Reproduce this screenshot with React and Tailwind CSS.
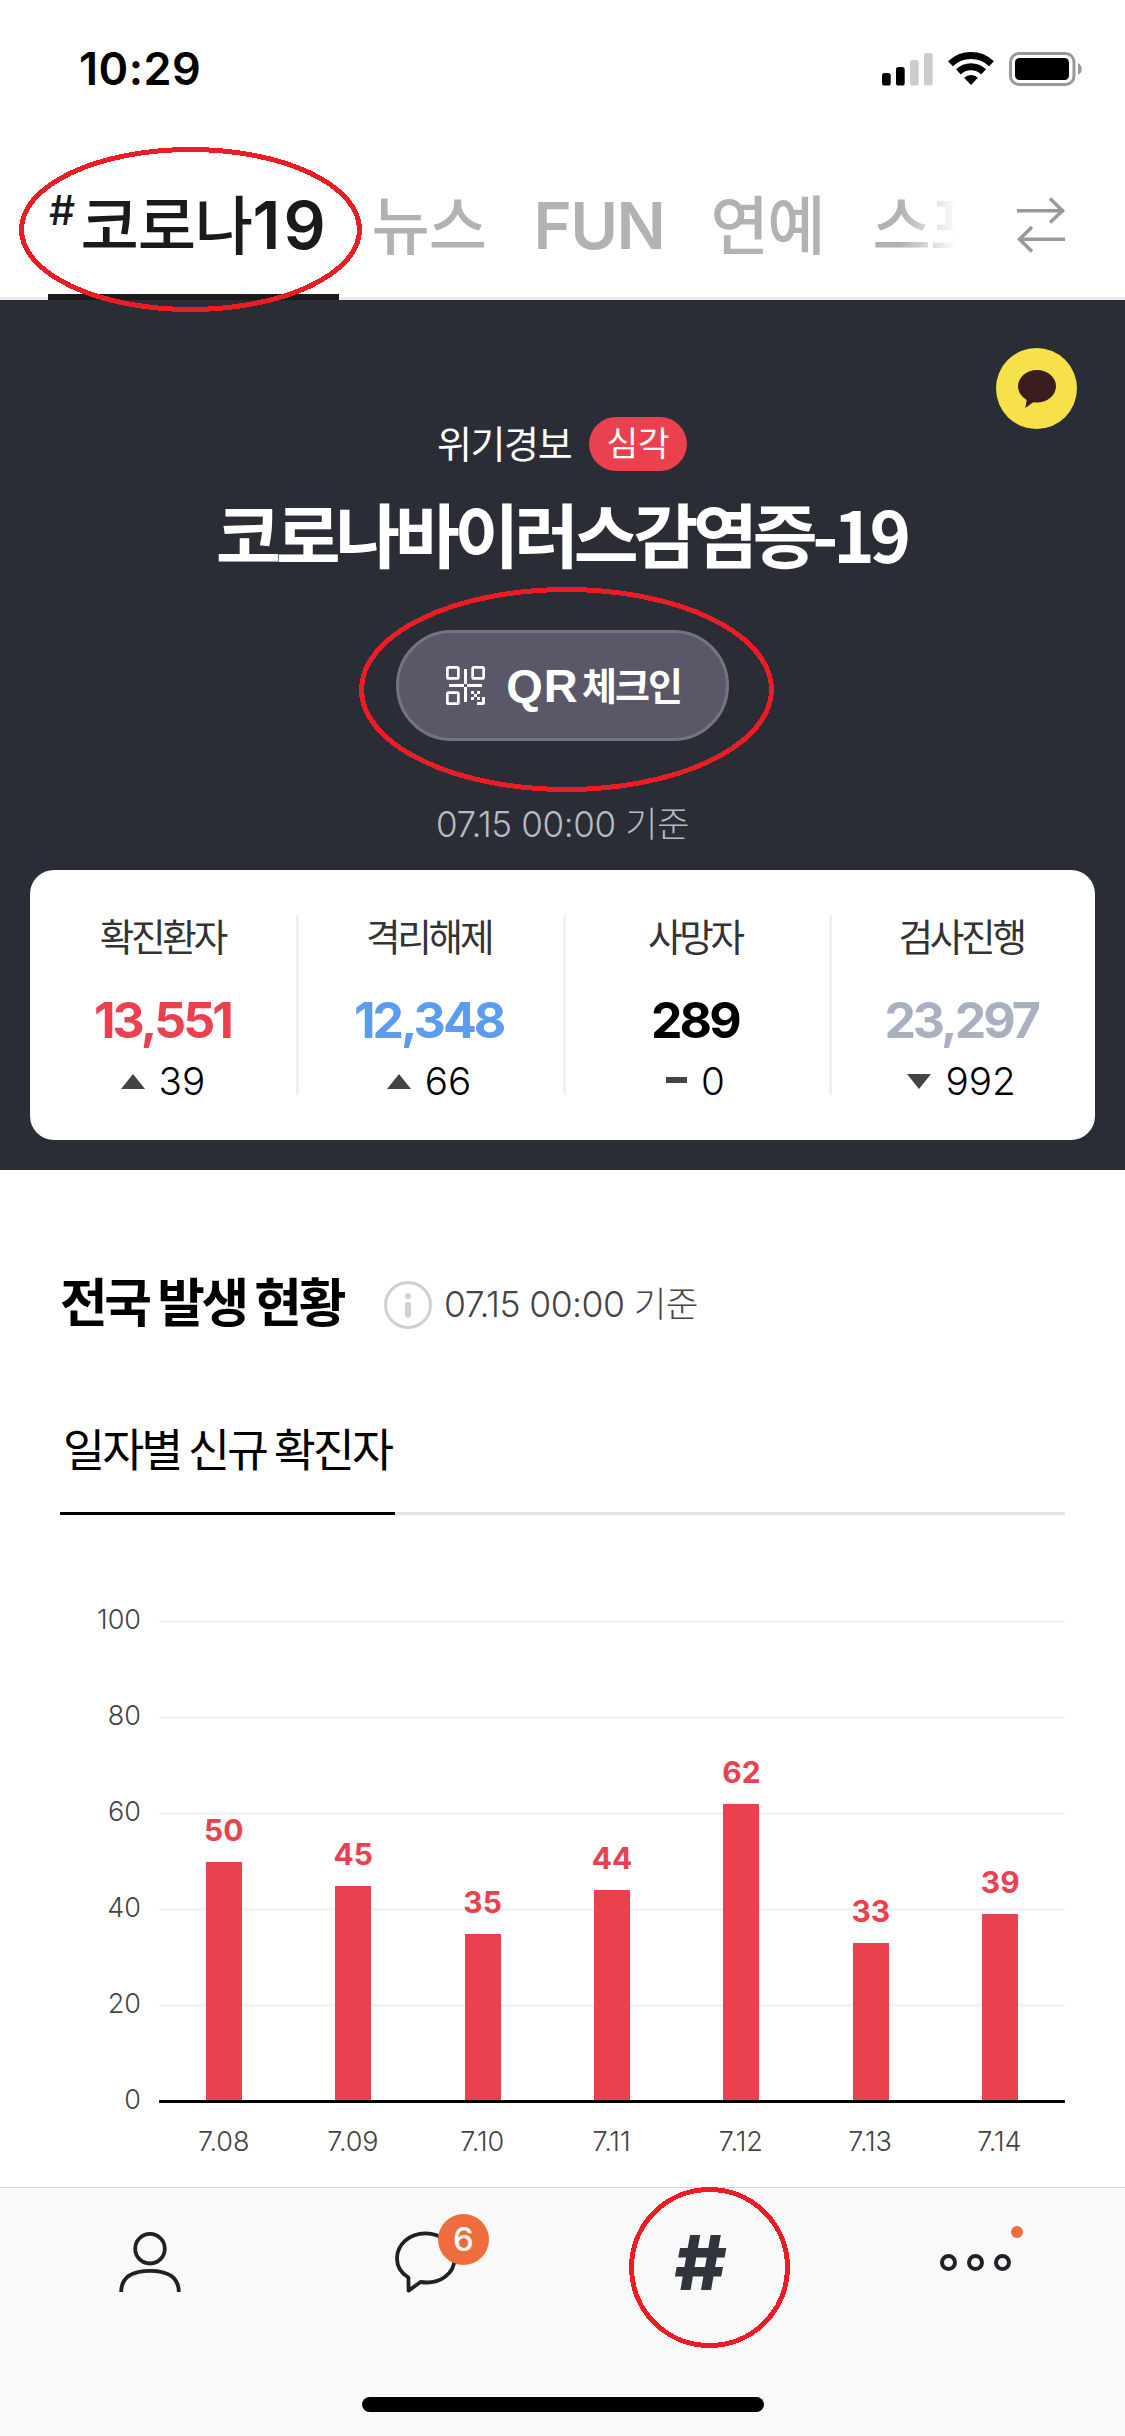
const KR = 'font-["Noto_Sans_CJK_KR",sans-serif]';
const LATIN = 'font-["Inter","Noto_Sans_CJK_KR",sans-serif]';

function SignalIcon() {
  return (
    <svg className="h-[34px] w-[51px]" viewBox="0 0 51 34">
      <rect x="0" y="21" width="8.7" height="12.5" rx="2.6" fill="#000" />
      <rect x="14" y="15" width="8.7" height="18.5" rx="2.6" fill="#000" />
      <rect x="28" y="8" width="8.7" height="25.5" rx="2.6" fill="#ccc" />
      <rect x="42" y="1" width="8.7" height="32.5" rx="2.6" fill="#ccc" />
    </svg>
  );
}

function WifiIcon() {
  return (
    <svg className="h-[34px] w-[46px]" viewBox="0 0 46 34">
      <g fill="none" stroke="#000" strokeWidth="7">
        <path d="M2.5 11.8A29.5 29.5 0 0 1 43.5 11.8" />
        <path d="M10.4 19.9A18.2 18.2 0 0 1 35.6 19.9" />
      </g>
      <path d="M23 33L16.1 25.8A10 10 0 0 1 29.9 25.8Z" fill="#000" />
    </svg>
  );
}

function BatteryIcon() {
  return (
    <svg className="h-[34px] w-[74px]" viewBox="0 0 74 34">
      <rect x="1.5" y="1.5" width="63.5" height="31" rx="8.5" fill="none" stroke="#999" strokeWidth="3" />
      <rect x="6" y="6" width="54" height="22" rx="4.5" fill="#000" />
      <path d="M69 11C74 13.5 74 20.5 69 23Z" fill="#999" />
    </svg>
  );
}

function SwapIcon() {
  return (
    <svg className="h-[56px] w-[50px]" viewBox="0 0 50 56" fill="none" stroke="#999" strokeWidth="3.5">
      <path d="M1 13.7H48M34 1.5L46.5 13.7L34 25.5" />
      <path d="M49 42.3H3M16 30L3.5 42.3L16 54.5" />
    </svg>
  );
}

function QrIcon() {
  return (
    <svg className="size-[39px]" viewBox="0 0 39 39">
      <g fill="none" stroke="#fff" strokeWidth="2.7">
        <rect x="1.35" y="1.35" width="11" height="11" rx="1.2" />
        <rect x="26.65" y="1.35" width="11" height="11" rx="1.2" />
        <rect x="1.35" y="26.65" width="11" height="11" rx="1.2" />
      </g>
      <path
        fill="#fff"
        d="M18 3h3v15h-3zM18 21h3v15h-3zM3 18h15v3H3zM21 18h15v3H21zM25 25h3v3h-3zM31 25h3v3h-3zM28 28h3v3h-3zM25 31h3v3h-3zM31 31h3v3h-3zM36 31h3v6a2 2 0 0 1-2 2h-6v-3h5z"
      />
    </svg>
  );
}

function InfoIcon() {
  return (
    <svg className="size-[48px]" viewBox="0 0 48 48">
      <circle cx="24" cy="24" r="22.5" fill="none" stroke="#d0d0d0" strokeWidth="3" />
      <circle cx="24" cy="15" r="3" fill="#d0d0d0" />
      <rect x="21" y="21" width="6" height="15.5" rx="3" fill="#d0d0d0" />
    </svg>
  );
}

const tabs = [
  { label: '뉴스', cls: 'w-[162px] tracking-[-1px]' },
  { label: 'FUN', cls: 'w-[177px] font-["Inter",sans-serif] text-[65px] font-semibold tracking-[-1.5px]' },
  { label: '연예', cls: 'w-[162px] tracking-[-1.5px]' },
  { label: '스포', cls: 'tracking-[-1px]' },
];

const stats = [
  { label: '확진환자', value: '13,551', color: 'text-[#eb414f]', dir: 'up', diff: '39' },
  { label: '격리해제', value: '12,348', color: 'text-[#5b9cf0]', dir: 'up', diff: '66' },
  { label: '사망자', value: '289', color: 'text-black', dir: 'same', diff: '0' },
  { label: '검사진행', value: '23,297', color: 'text-[#a9b1c0]', dir: 'down', diff: '992' },
];

const days = [
  ['7.08', 50],
  ['7.09', 45],
  ['7.10', 35],
  ['7.11', 44],
  ['7.12', 62],
  ['7.13', 33],
  ['7.14', 39],
];

function Trend({ dir }) {
  if (dir === 'same') return <div className="mb-[3px] h-[6px] w-[21px] bg-[#444]" />;
  return (
    <svg className="h-[15px] w-6" viewBox="0 0 24 15" fill="#444">
      <path d={dir === 'up' ? 'M12 0L24 15H0Z' : 'M0 0H24L12 15Z'} />
    </svg>
  );
}

function StatusBar() {
  return (
    <div className="flex h-[132px] items-start pl-[79px]">
      <div className={`${LATIN} mt-[42px] text-[45px] leading-[54px] font-semibold tracking-[0.5px] text-black`}>10:29</div>
      <div className="mt-[52px] mr-[42px] ml-auto flex gap-[15px]">
        <SignalIcon />
        <WifiIcon />
        <BatteryIcon />
      </div>
    </div>
  );
}

function TopTabs() {
  return (
    <div className="flex h-[168px] border-b-[3px] border-[#e8ebe9]">
      <div className="relative h-[168px] w-[957px] overflow-hidden">
        <div className={`${KR} flex items-baseline pt-[49px] pl-[48px] text-[63.4px] leading-[80px] font-medium whitespace-nowrap text-[#b2b2b2]`}>
          <div className="flex w-[323.5px] shrink-0 items-baseline text-[#1a1a1a]">
            <span className='w-[32.5px] -translate-y-6 pl-[1px] font-["Inter",sans-serif] text-[41px]'>#</span>
            <span className="w-[172px] tracking-[-1.15px]">코로나</span>
            <span className='font-["Inter",sans-serif] text-[66px] font-semibold tracking-[3px]'>19</span>
          </div>
          {tabs.map((t) => (
            <span key={t.label} className={`shrink-0 ${t.cls}`}>{t.label}</span>
          ))}
        </div>
        <div className="absolute bottom-0 left-[48px] h-[6px] w-[291px] bg-[#1a1a1a]" />
        <div className="absolute top-0 right-0 bottom-[3px] w-[57px] bg-linear-to-r from-white/0 to-white" />
      </div>
      <div className="mt-[65px] ml-[59px]">
        <SwapIcon />
      </div>
    </div>
  );
}

function Hero() {
  return (
    <section className="relative flex h-[870px] flex-col bg-[#2a2d36] pt-[117px]">
      <div className="absolute top-[48px] right-[48px] flex size-[81px] items-center justify-center rounded-full bg-[#f7e14b]">
        <svg className="mt-[1px] h-[38px] w-[38px]" viewBox="0 0 38 38" fill="#3a1d1f">
          <ellipse cx="19" cy="16.3" rx="19" ry="16.3" />
          <path d="M9 28.5L7.3 38L17 31Z" />
        </svg>
      </div>

      <div className={`${KR} flex h-[54px] items-center pl-[437px] text-white`}>
        <span className="-mt-[4px] w-[152px] text-[38px] leading-[54px] tracking-[-1.4px]">위기경보</span>
        <span className="flex h-[54px] w-[98px] items-center justify-center rounded-full bg-[#eb414f]">
          <span className="-mt-[6px] text-[34.5px] leading-[54px] tracking-[-0.2px]">심각</span>
        </span>
      </div>

      <h1 className={`${KR} mt-[16px] pr-[3px] text-center text-[70.5px] leading-[90px] font-bold tracking-[-5.23px] text-white`}>
        코로나바이러스감염증-19
      </h1>

      <button className="mx-auto mt-[53px] flex h-[111px] w-[333px] items-center rounded-full border-[3px] border-[#757281] bg-[#5a5769] pl-[47px] text-white">
        <QrIcon />
        <span className='ml-[18px] w-[79px] font-["Liberation_Sans",sans-serif] text-[47px] leading-[60px] font-bold tracking-[1px]'>QR</span>
        <span className={`${KR} -mt-[4px] text-[38px] leading-[60px] font-bold tracking-[-2px]`}>체크인</span>
      </button>

      <div className={`${LATIN} mt-[61px] text-center text-[35px] leading-[44px] font-light tracking-[-0.35px] text-[#b9babf]`}>
        07.15 00:00 기준
      </div>

      <div className="mx-[30px] mt-[24px] grid h-[270px] grid-cols-4 rounded-3xl bg-white">
        {stats.map((s, i) => (
          <div key={s.label} className="relative flex flex-col items-center pt-[43px] pr-[1.5px]">
            {i > 0 && <div className="absolute top-[45px] left-0 h-[180px] w-[3px] bg-[#f0f0f0]" />}
            <div className={`${KR} text-[37.6px] leading-[44px] tracking-[-3.3px] text-[#333]`}>{s.label}</div>
            <div className={`${LATIN} mt-[35px] text-[50px] leading-[56px] font-bold tracking-[-3px] ${s.color}`}>{s.value}</div>
            <div className="mt-[11px] flex items-center gap-[14px] pl-[1px]">
              <Trend dir={s.dir} />
              <span className={`${LATIN} text-[38.7px] leading-[44px] font-light text-black`}>{s.diff}</span>
            </div>
          </div>
        ))}
      </div>
    </section>
  );
}

function Chart() {
  return (
    <div className={`${LATIN} mt-[57px] flex text-[27px] font-light text-[#444]`}>
      <div className="w-[81px] text-right leading-[96px]">
        {[100, 80, 60, 40, 20, 0].map((n) => (
          <div key={n}>{n}</div>
        ))}
      </div>
      <div className="mt-[48px] ml-[18px] flex-1">
        <div className="relative">
          {[100, 80, 60, 40, 20].map((n) => (
            <div key={n} className="h-[96px] border-t-[3px] border-[#f4f4f5]" />
          ))}
          <div className="h-[3px] bg-black" />
          <div className="absolute inset-x-0 top-0 bottom-[3px] grid grid-cols-7">
            {days.map(([d, v]) => (
              <div key={d} className="flex flex-col items-center justify-end">
                <div className="mb-[16px] text-[30px] leading-[32px] font-bold text-[#eb414f]">{v}</div>
                <div className="w-[36px] bg-[#eb414f]" style={{ height: Math.round(v * 4.8 - 1.6) }} />
              </div>
            ))}
          </div>
        </div>
        <div className="mt-[21px] grid grid-cols-7 pr-[1px] text-center leading-[36px] tracking-[-0.1px]">
          {days.map(([d]) => (
            <div key={d}>{d}</div>
          ))}
        </div>
      </div>
    </div>
  );
}

function Overview() {
  return (
    <section className="h-[1017px] bg-white px-[60px] pt-[100px]">
      <div className="flex items-start">
        <h2 className={`${KR} w-[324px] text-[51.8px] leading-[60px] font-bold tracking-[-3.3px] whitespace-nowrap text-black`}>전국 발생 현황</h2>
        <div className="mt-[11px]">
          <InfoIcon />
        </div>
        <div className={`${LATIN} mt-[13px] ml-[12px] text-[35.5px] leading-[44px] font-light tracking-[-0.55px] text-[#444]`}>07.15 00:00 기준</div>
      </div>
      <div className="mt-[89px] flex h-[96px] border-b-[3px] border-[#e4e3e9]">
        <div className={`${KR} -mb-[3px] w-[335px] border-b-[3px] border-black pl-[3px] text-[45.7px] leading-[56px] font-normal tracking-[-2.85px] whitespace-nowrap text-black`}>
          일자별 신규 확진자
        </div>
      </div>
      <Chart />
    </section>
  );
}

function BottomBar() {
  return (
    <nav className="h-[249px] border-t border-[#d6d6d6] bg-[#f9f9f9]">
      <div className="mx-[12px] grid h-[209px] grid-cols-4 pt-[44px]">
        <div className="flex justify-center">
          <svg className="h-[60px] w-[62px]" viewBox="0 0 62 60" fill="none" stroke="#1e2126" strokeWidth="3.8">
            <ellipse cx="31" cy="16.7" rx="14.8" ry="14.8" />
            <path d="M2.2 60C2.2 46 12 38.8 31 38.8S59.8 46 59.8 60" />
          </svg>
        </div>
        <div className="flex justify-center pl-[2px]">
          <div className="relative -mt-[1px] h-[62px] w-[62px]">
            <svg className="h-[62px] w-[62px]" viewBox="0 0 62 62" fill="none" stroke="#1e2126" strokeWidth="3.8" strokeLinejoin="round">
              <path d="M13.4 46.5C6 42 2 35.5 2 27.5C2 13.5 14.5 2.4 30.5 2.4S59.5 13.5 59.5 27.5C59.5 42.5 45 54 25.5 51L13.6 59.6Z" />
            </svg>
            <div className='absolute top-[-17px] left-[43px] flex size-[51px] items-center justify-center rounded-full bg-[#ed6d3d] font-["Inter",sans-serif] text-[33px] leading-[51px] font-medium text-white'>
              6
            </div>
          </div>
        </div>
        <div className='scale-x-106 text-center font-["Inter",sans-serif] text-[76px] leading-[60px] font-extrabold text-[#2f343d]'>#</div>
        <div className="flex justify-center">
          <div className="relative mt-[22px] flex h-[17px] gap-[10px]">
            <div className="size-[17px] rounded-full border-4 border-[#1e2126]" />
            <div className="size-[17px] rounded-full border-4 border-[#1e2126]" />
            <div className="size-[17px] rounded-full border-4 border-[#1e2126]" />
            <div className="absolute top-[-28px] left-[71px] size-[12px] rounded-full bg-[#ed6d3d]" />
          </div>
        </div>
      </div>
      <div className="mx-auto h-[15px] w-[402px] rounded-full bg-black" />
    </nav>
  );
}

/* Hand-drawn highlight rings laid over the screen. */
function Highlights() {
  return (
    <svg className="pointer-events-none absolute top-0 left-0 h-[2436px] w-[1125px]" viewBox="0 0 1125 2436" fill="none" stroke="#ed1c24" strokeWidth="5" shapeRendering="crispEdges">
      <ellipse cx="190.5" cy="229.5" rx="169" ry="80" />
      <ellipse cx="566.5" cy="689.5" rx="205" ry="100" />
      <ellipse cx="709.5" cy="2267.5" rx="78" ry="78" />
    </svg>
  );
}

export default function App() {
  return (
    <div className="relative h-[2436px] w-[1125px] overflow-hidden bg-white">
      <StatusBar />
      <TopTabs />
      <Hero />
      <Overview />
      <BottomBar />
      <Highlights />
    </div>
  );
}
